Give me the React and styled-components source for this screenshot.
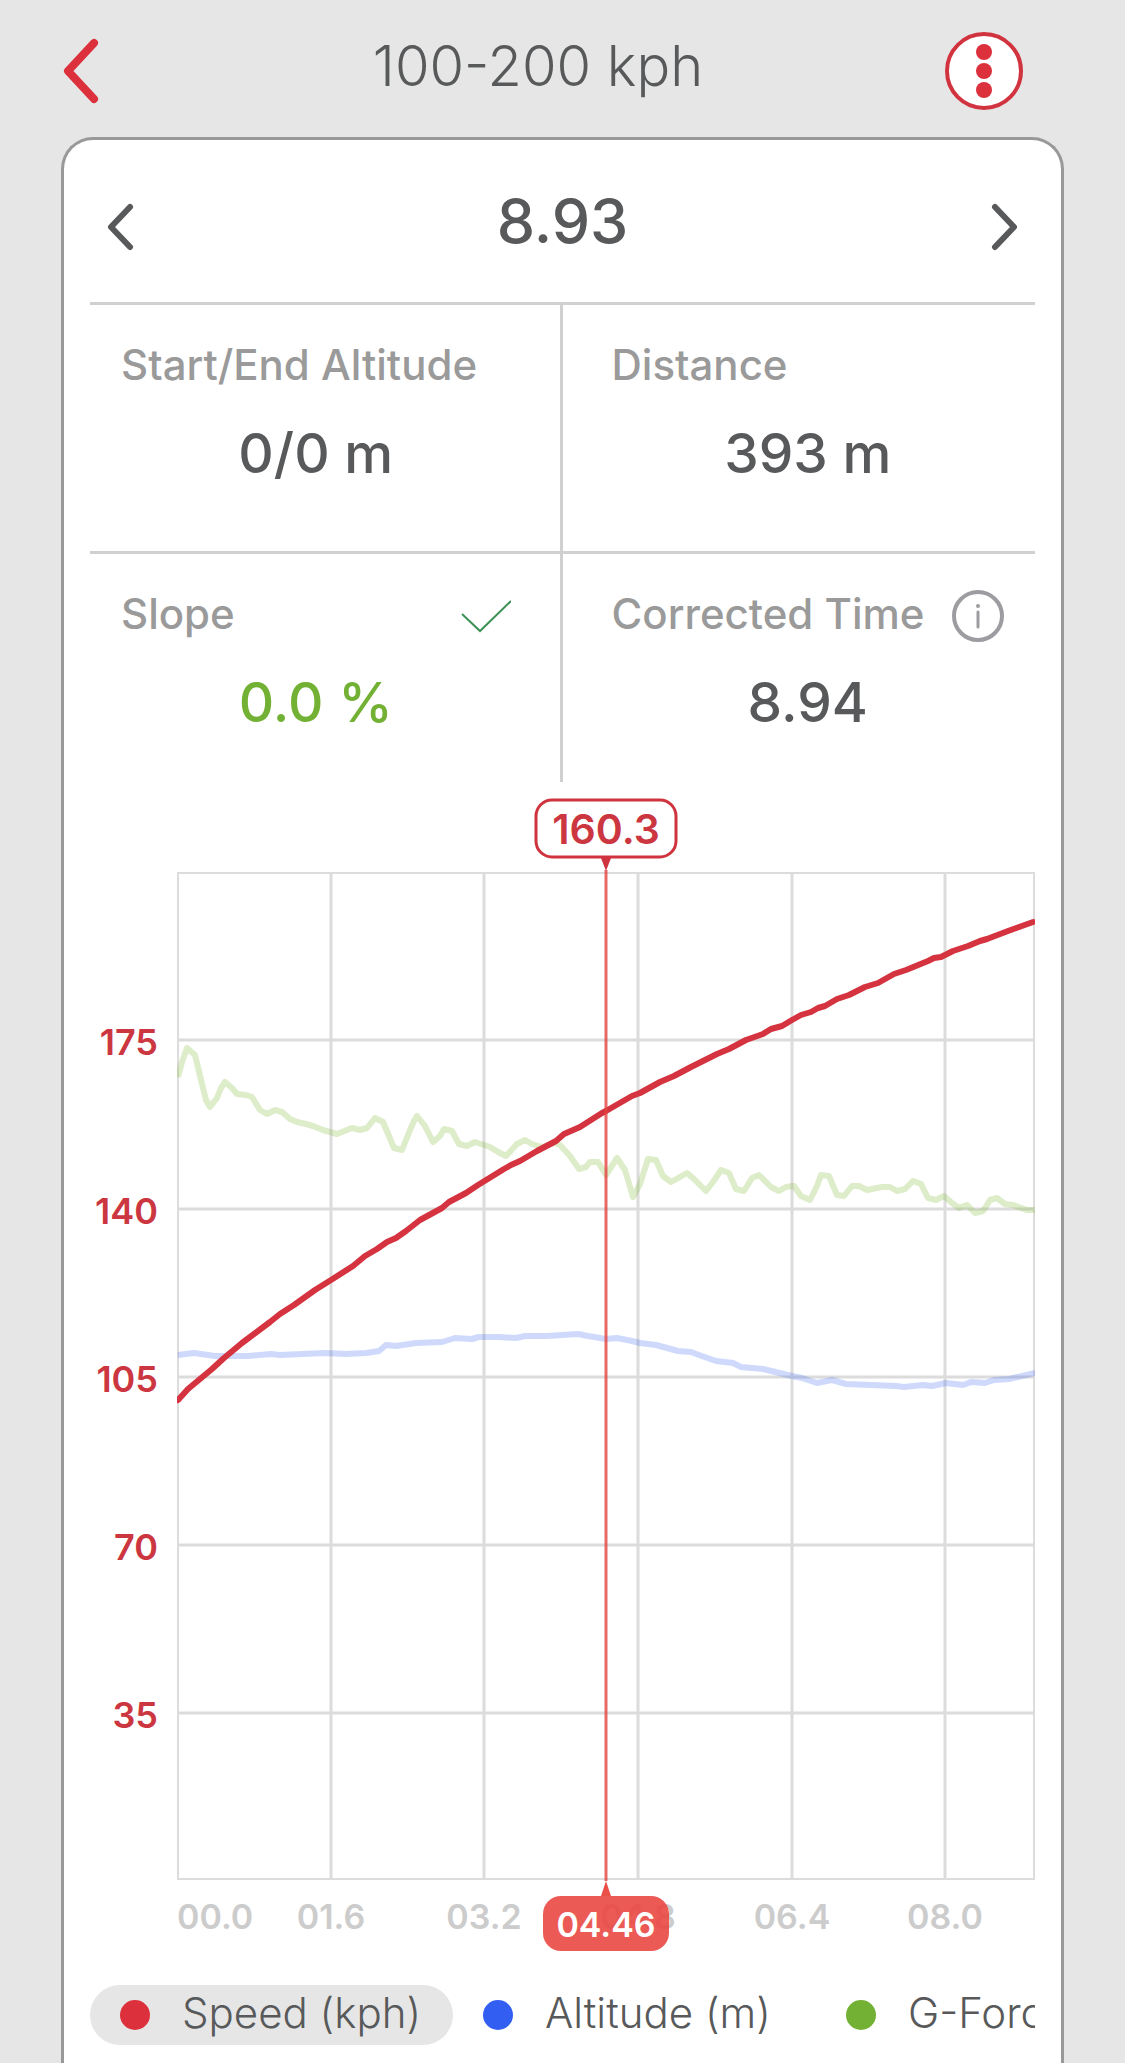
import { useState } from "react";
import styled, { createGlobalStyle } from "styled-components";

const red = "#dc303c";
const grey = "#58595a";

const stats = [
  { label: "Start/End Altitude", value: "0/0 m" },
  { label: "Distance", value: "393 m" },
  { label: "Slope", value: "0.0 %", icon: "check", color: "#73b135" },
  { label: "Corrected Time", value: "8.94", icon: "info" },
];

const series = [
  { name: "Speed (kph)", color: red },
  { name: "Altitude (m)", color: "#325ff2" },
  { name: "G-Force (g)", color: "#73b135" },
];

//Grid lines and their labels, in plot units
const speedTicks = [
  { label: "175", y: 168 },
  { label: "140", y: 337 },
  { label: "105", y: 505 },
  { label: "70", y: 673 },
  { label: "35", y: 841 },
];

const timeTicks = [
  { label: "01.6", x: 153 },
  { label: "03.2", x: 306 },
  { label: "04.8", x: 460 },
  { label: "06.4", x: 614 },
  { label: "08.0", x: 767 },
];

const speedLine =
  "0,528 10,517 34,497 46,486 64,471 92,450 102,442 116,433 137,418 153,408 175,394 187,384 199,377 209,370 218,366 228,359 242,348 264,336 271,330 288,321 300,313 326,297 333,293 342,289 359,279 378,269 386,262 402,255 424,241 428,239 454,224 462,221 482,210 496,204 513,195 539,182 551,177 568,168 585,162 593,157 604,154 614,148 623,143 633,140 640,136 647,134 659,127 671,123 687,115 700,111 716,102 728,98 750,89 756,86 763,85 775,79 790,74 802,69 809,67 830,59 855,50";

const altitudeLine =
  "0,483 16,481 37,484 70,484 93,482 102,483 147,481 168,482 188,481 201,479 208,473 218,474 238,471 264,470 277,466 294,467 301,465 321,465 338,466 347,464 369,464 400,462 410,464 428,467 439,466 454,469 462,471 478,473 500,479 513,480 521,483 538,489 555,491 563,495 585,497 614,504 624,506 639,511 654,508 668,512 718,514 726,515 745,513 754,514 768,511 785,513 793,510 807,511 816,508 831,507 857,501";

const forceLine =
  "0,205 4,190 9,176 17,183 24,212 28,228 32,235 39,226 43,216 47,210 54,216 59,222 68,223 74,225 82,238 89,242 97,238 104,240 112,247 119,250 128,252 135,254 145,258 159,262 174,256 182,258 189,256 197,246 205,250 211,264 216,276 224,278 232,258 236,249 239,244 247,254 255,270 262,264 266,257 274,259 281,272 289,274 297,270 312,275 320,280 328,284 339,272 347,268 354,272 364,275 376,271 382,273 392,284 401,297 408,295 412,290 420,290 428,303 439,286 447,298 455,325 462,312 470,287 478,288 485,304 493,310 509,301 516,307 528,319 535,310 543,298 551,301 558,317 566,319 574,306 581,303 593,315 601,319 608,315 616,314 623,324 632,328 639,314 643,303 651,304 659,323 666,324 674,314 681,314 689,318 704,315 712,315 719,319 727,317 735,309 743,312 750,326 758,328 766,324 774,331 781,336 789,333 797,341 805,339 812,328 819,326 827,332 835,333 849,338 857,338";

const Chart = () => (
  <ChartSvg viewBox="0 0 945 1183" role="img" aria-label="Speed over time">
    <defs>
      <clipPath id="plot">
        <rect x="-1" y="0" width="858" height="1008" />
      </clipPath>
    </defs>
    <g transform="translate(88 90)">
      <rect x="0" y="1" width="856" height="1006" fill="none" stroke="#dcdcdc" strokeWidth="2" />
      {speedTicks.map(({ label, y }) => (
        <g key={label}>
          <path d={`M0 ${y}H856`} stroke="#dcdcdc" strokeWidth="3" />
          <SpeedText x="-20" y={y + 15} textAnchor="end">
            {label}
          </SpeedText>
        </g>
      ))}
      <TimeText x="-1" y="1057">
        00.0
      </TimeText>
      {timeTicks.map(({ label, x }) => (
        <g key={label}>
          <path d={`M${x} 1V1007`} stroke="#dcdcdc" strokeWidth="3" />
          <TimeText x={x} y="1057" textAnchor="middle">
            {label}
          </TimeText>
        </g>
      ))}

      <g clipPath="url(#plot)" fill="none" strokeWidth="6" strokeLinejoin="round">
        <polyline points={forceLine} stroke="#76b528" strokeOpacity="0.25" />
        <polyline points={altitudeLine} stroke="#325ff2" strokeOpacity="0.24" />
        <polyline points={speedLine} stroke="#d4333f" strokeLinecap="round" />
      </g>

      {/* cursor */}
      <path d="M428 -2V1009" stroke="#e1423d" strokeOpacity="0.8" strokeWidth="3" />
      <path d="M423 -14H433L428 -1Z" fill="#cf343e" />
      <rect x="358" y="-72" width="140" height="57" rx="16" fill="#fff" stroke="#cf343e" strokeWidth="3" />
      <CursorText x="428" y="-28" textAnchor="middle">
        160.3
      </CursorText>
      <path d="M423 1024H433L428 1009Z" fill="#ea5049" />
      <rect x="365" y="1024" width="126" height="55" rx="18" fill="#ea4842" fillOpacity="0.9" />
      <TimeText x="428" y="1065" textAnchor="middle" $color="#fff">
        04.46
      </TimeText>
    </g>
  </ChartSvg>
);

const App = () => {
  const [selected, setSelected] = useState("Speed (kph)");

  return (
    <Page>
      <GlobalStyle />
      <Header>
        <BackButton aria-label="Back">
          <svg width="40" height="68" viewBox="0 0 40 68" fill="none" stroke={red} strokeWidth="8" strokeLinecap="round" strokeLinejoin="round">
            <path d="M33 6L7 34L33 62" />
          </svg>
        </BackButton>
        <PageTitle>100-200 kph</PageTitle>
        <MenuButton aria-label="More options">
          <svg width="70" height="70" viewBox="0 0 70 70" fill={red}>
            <circle cx="35" cy="16" r="8" />
            <circle cx="35" cy="35" r="8" />
            <circle cx="35" cy="54" r="8" />
          </svg>
        </MenuButton>
      </Header>

      <Card>
        <ResultRow>
          <StepButton aria-label="Previous run">
            <svg width="30" height="50" viewBox="0 0 30 50" fill="none" stroke={grey} strokeWidth="6" strokeLinecap="round" strokeLinejoin="round">
              <path d="M26 5L7 25L26 45" />
            </svg>
          </StepButton>
          <Result>8.93</Result>
          <StepButton aria-label="Next run">
            <svg width="30" height="50" viewBox="0 0 30 50" fill="none" stroke={grey} strokeWidth="6" strokeLinecap="round" strokeLinejoin="round">
              <path d="M4 5L23 25L4 45" />
            </svg>
          </StepButton>
        </ResultRow>

        <StatGrid>
          {stats.map((item) => (
            <Stat key={item.label}>
              <StatHead>
                <StatLabel>{item.label}</StatLabel>
                {item.icon === "check" && (
                  <svg width="50" height="34" viewBox="0 0 50 34" fill="none" stroke="#3d9155" strokeWidth="2">
                    <path d="M1 15L19 32L50 2" />
                  </svg>
                )}
                {item.icon === "info" && (
                  <InfoButton aria-label="About corrected time">
                    <svg width="52" height="52" viewBox="0 0 52 52" fill="none" stroke="#9c9ca1">
                      <circle cx="26" cy="26" r="24" strokeWidth="4" />
                      <path d="M26 22V37" strokeWidth="3" strokeLinecap="round" />
                      <circle cx="26" cy="16" r="2" fill="#9c9ca1" stroke="none" />
                    </svg>
                  </InfoButton>
                )}
              </StatHead>
              <StatValue $color={item.color}>{item.value}</StatValue>
            </Stat>
          ))}
        </StatGrid>

        <Chart />

        <Legend>
          {series.map((item) => (
            <LegendItem
              key={item.name}
              aria-pressed={selected === item.name}
              $active={selected === item.name}
              onClick={() => setSelected(item.name)}
            >
              <Dot $color={item.color} />
              <LegendText>{item.name}</LegendText>
            </LegendItem>
          ))}
        </Legend>
      </Card>
    </Page>
  );
};

export default App;

const GlobalStyle = createGlobalStyle`
  * {
    box-sizing: border-box;
  }
  body {
    margin: 0;
    background: #e6e6e6;
    color: ${grey};
    font-family: Inter, "Liberation Sans", sans-serif;
  }
  button {
    padding: 0;
    border: none;
    background: none;
    color: inherit;
    font: inherit;
    cursor: pointer;
  }
  svg {
    display: block;
  }
`;

const Page = styled.div`
  min-height: 100vh;
  display: flex;
  flex-direction: column;
`;

const Header = styled.header`
  height: 137px;
  padding: 32px 102px 0 61px;
  display: flex;
  align-items: flex-start;
`;

const BackButton = styled.button`
  width: 70px;
  height: 78px;
  display: flex;
  align-items: center;
`;

const PageTitle = styled.h1`
  flex: 1;
  margin: 0;
  font-size: 56px;
  line-height: 68px;
  font-weight: 300;
  text-align: center;
`;

const MenuButton = styled.button`
  width: 78px;
  height: 78px;
  display: flex;
  align-items: center;
  justify-content: center;
  border: 4px solid #d2343f;
  border-radius: 50%;
  background: #fff;
`;

const Card = styled.main`
  flex: 1;
  margin: 0 61px;
  padding: 0 26px 16px;
  border: 3px solid #999;
  border-bottom: none;
  border-radius: 32px 32px 0 0;
  background: #fff;
`;

const ResultRow = styled.section`
  height: 165px;
  padding: 0 14px;
  display: flex;
  align-items: center;
  justify-content: space-between;
  border-bottom: 3px solid #d0d0d0;
`;

const StepButton = styled.button`
  padding-top: 12px;
`;

const Result = styled.h2`
  margin: 0;
  font-size: 61px;
  line-height: 72px;
  font-weight: 500;
`;

const StatGrid = styled.section`
  display: grid;
  grid-template-columns: 1fr 1fr;
`;

const Stat = styled.div`
  height: 228px;
  padding: 32px 49px 0 31px;
  border-right: 3px solid #d0d0d0;
  &:nth-child(-n + 2) {
    height: 249px;
    border-bottom: 3px solid #d0d0d0;
  }
  &:nth-child(even) {
    padding: 32px 31px 0 49px;
    border-right: none;
  }
`;

const StatHead = styled.div`
  height: 60px;
  display: flex;
  align-items: center;
  justify-content: space-between;
`;

const StatLabel = styled.span`
  padding-bottom: 4px;
  color: #9a9a9a;
  font-size: 42px;
  line-height: 54px;
  font-weight: 500;
  white-space: nowrap;
`;

const InfoButton = styled.button`
  flex-shrink: 0;
`;

const StatValue = styled.p`
  margin: 24px 0 0;
  color: ${({ $color }) => $color || grey};
  font-size: 55px;
  line-height: 64px;
  font-weight: 500;
  text-align: center;
`;

const ChartSvg = styled.svg`
  width: 100%;
  height: auto;
`;

const SpeedText = styled.text`
  fill: #cc3640;
  font-size: 36px;
  font-weight: 600;
`;

const TimeText = styled.text`
  fill: ${({ $color }) => $color || "#ccc"};
  font-size: 34px;
  font-weight: 600;
`;

const CursorText = styled.text`
  fill: #cc3640;
  font-size: 41px;
  font-weight: 600;
`;

const Legend = styled.div`
  margin-top: 20px;
  display: flex;
  overflow: hidden;
`;

const LegendItem = styled.button`
  min-width: 363px;
  height: 60px;
  padding: 0 30px;
  display: flex;
  flex-shrink: 0;
  align-items: center;
  gap: 32px;
  border-radius: 30px;
  background: ${({ $active }) => ($active ? "#e6e6e6" : "none")};
`;

const LegendText = styled.span`
  padding-bottom: 4px;
  font-size: 42px;
  line-height: 54px;
  font-weight: 300;
  white-space: nowrap;
`;

const Dot = styled.span`
  width: 30px;
  height: 30px;
  border-radius: 50%;
  background: ${({ $color }) => $color};
`;
